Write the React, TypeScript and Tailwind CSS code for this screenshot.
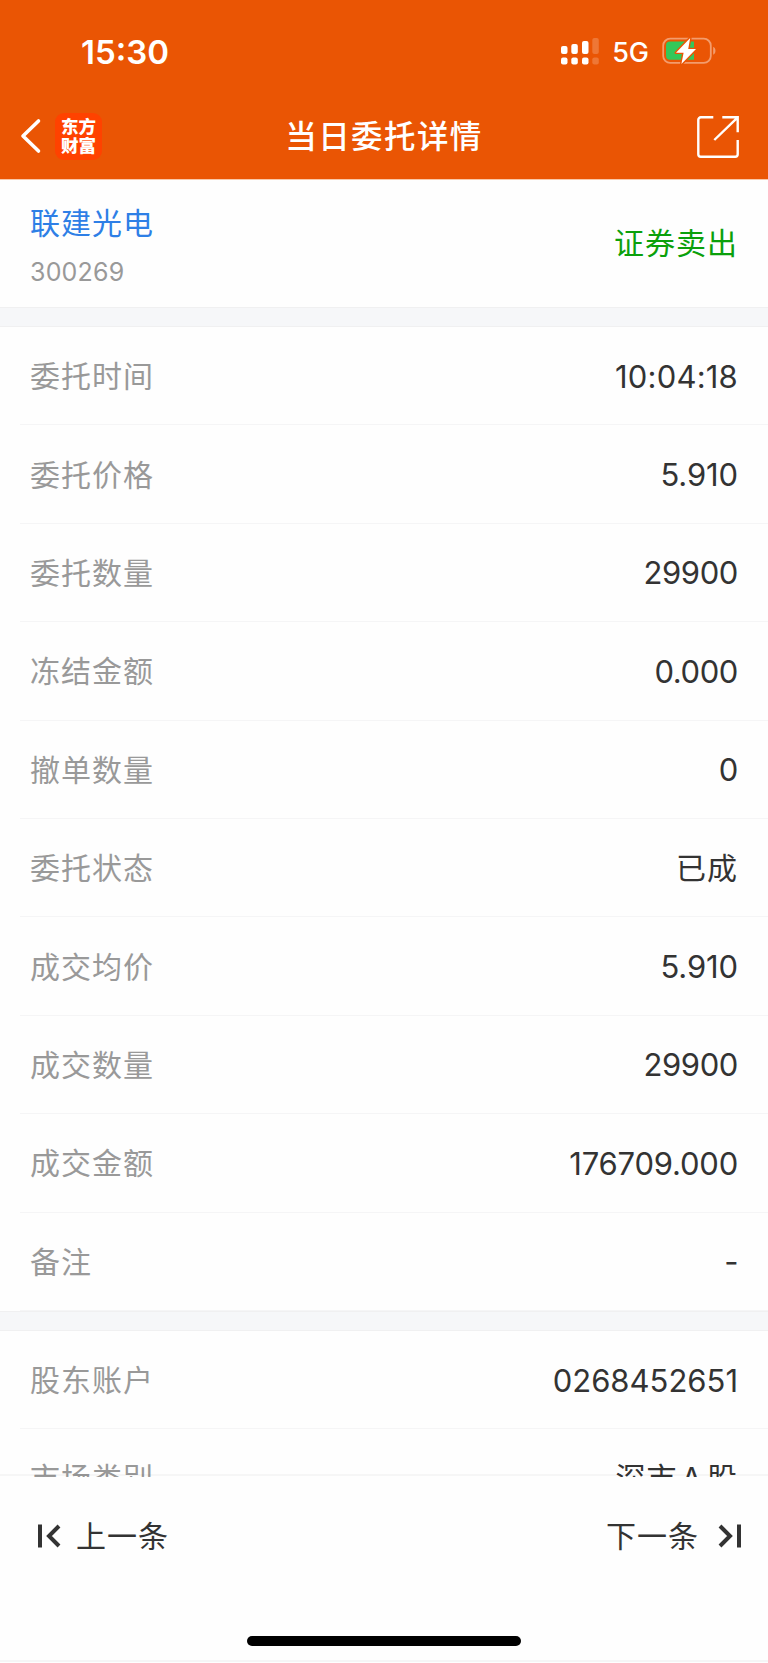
import clsx from "clsx";

type Item = { label: string; value: string; spacing?: string };

const orderItems: Item[] = [
  { label: "委托时间", value: "10:04:18", spacing: "tracking-[0.2px]" },
  { label: "委托价格", value: "5.910", spacing: "tracking-[-0.1px]" },
  { label: "委托数量", value: "29900" },
  { label: "冻结金额", value: "0.000" },
  { label: "撤单数量", value: "0" },
  { label: "委托状态", value: "已成", spacing: "tracking-[1px]" },
  { label: "成交均价", value: "5.910", spacing: "tracking-[-0.1px]" },
  { label: "成交数量", value: "29900" },
  { label: "成交金额", value: "176709.000", spacing: "tracking-[-0.2px]" },
  { label: "备注", value: "-" },
];

const accountItems: Item[] = [
  { label: "股东账户", value: "0268452651", spacing: "tracking-[0px]" },
  { label: "市场类别", value: "深市 A 股", spacing: "tracking-[1px] [word-spacing:-5.5px]" },
];

const SignalIcon = () => (
  <svg className="-mt-[2px]" width="40" height="28" viewBox="0 0 40 28" fill="white">
    <rect x="1" y="9" width="6.5" height="8" rx="2" />
    <rect x="11.3" y="7" width="6.5" height="10" rx="2" />
    <rect x="22" y="4" width="6.5" height="13" rx="2" />
    <rect x="32.3" y="1" width="6.5" height="16" rx="2" opacity="0.2" />
    <rect x="1" y="20.5" width="6.5" height="7" rx="2" />
    <rect x="11.3" y="20.5" width="6.5" height="7" rx="2" />
    <rect x="22" y="20.5" width="6.5" height="7" rx="2" />
    <rect x="32.3" y="20.5" width="6.5" height="7" rx="2" opacity="0.2" />
  </svg>
);

const BatteryIcon = () => (
  <svg className="-mt-[2px]" width="56" height="28" viewBox="0 0 56 28" fill="none">
    <rect x="1.2" y="1.7" width="47.6" height="24.2" rx="7" stroke="white" strokeOpacity="0.42" strokeWidth="1.8" />
    <path d="M51.2 9.8c3 1.2 3 6.8 0 8z" fill="white" fillOpacity="0.42" />
    <path d="M8 4.6h24v18.2H8a4 4 0 0 1-4-4V8.6a4 4 0 0 1 4-4z" fill="#34c759" />
    <path
      d="M28.2 1 14 15.7h7.6L19.4 27 34 12.1h-7.8z"
      fill="white"
      stroke="#ea5504"
      strokeWidth="2.8"
      strokeLinejoin="round"
      paintOrder="stroke"
    />
  </svg>
);

const ShareIcon = () => (
  <svg className="mt-[1px]" width="42" height="42" viewBox="0 0 42 42" fill="none" stroke="white" strokeWidth="2.4">
    <path d="M16.3 1.3H3.8a2.5 2.5 0 0 0-2.5 2.5v34.4a2.5 2.5 0 0 0 2.5 2.5h34.4a2.5 2.5 0 0 0 2.5-2.5V24" />
    <path d="M25.3 1.3h15.4v15M40.2 1.8 17.3 24" />
  </svg>
);

const StepIcon = ({ className }: { className?: string }) => (
  <svg className={className} width="24" height="24" viewBox="0 0 24 24" fill="none" stroke="#333333" strokeWidth="4">
    <path d="M3 0.6v22.8M22 2 12 12 22 22" />
  </svg>
);

const Row = ({ label, value, spacing = "tracking-[-0.4px]" }: Item) => (
  <div className="ml-5 flex h-[98.4px] shrink-0 items-center justify-between border-b-[1.5px] border-[#f5f5f6] pt-[1px] pr-[30px] pl-[10px] leading-none">
    <span className="text-[30px] tracking-[1px] text-[#999999]">{label}</span>
    <span className={clsx("text-[#333333]", /\d|^-$/.test(value) ? "text-[31px]" : "text-[30px]", spacing)}>{value}</span>
  </div>
);

const Gap = () => <div className="h-5 shrink-0 border-y border-[#f0f0f1] bg-[#f6f7f9]" />;

const App = () => {
  return (
    <div className="flex h-[1663px] w-[768px] flex-col overflow-hidden bg-[#fefefe] font-['Inter','Noto_Sans_CJK_SC',sans-serif]">
      <header className="h-[180px] shrink-0 border-b border-[#f9c7a9] bg-[#ea5504] text-white">
        <div className="flex h-[104px] items-center justify-between pr-[50px] pl-[81px]">
          <span className="text-[33px] leading-none font-semibold">15:30</span>
          <div className="flex items-center">
            <SignalIcon />
            <span className="mr-[13px] ml-[12px] text-[27px] leading-none font-medium">5G</span>
            <BatteryIcon />
          </div>
        </div>
        <div className="grid h-[64px] grid-cols-3 items-center">
          <div className="flex items-center pl-5">
            <svg width="22" height="36" viewBox="0 0 22 36" fill="none" stroke="white" strokeWidth="3.6" strokeLinecap="round" strokeLinejoin="round">
              <path d="M18.5 3 3 18l15.5 15" />
            </svg>
            <div className="ml-[13px] flex h-[47px] w-[47px] flex-col items-center justify-center rounded-[9px] bg-[#ff4200] text-[17.5px] leading-[19px] font-black">
              <span>东方</span>
              <span>财富</span>
            </div>
          </div>
          <h1 className="pt-[2px] text-center text-[31.5px] leading-none font-medium tracking-[1.4px] whitespace-nowrap">当日委托详情</h1>
          <div className="flex justify-end pr-[29px]">
            <ShareIcon />
          </div>
        </div>
      </header>

      <main className="flex h-[1297px] shrink-0 flex-col overflow-hidden">
        <section className="flex h-[127px] shrink-0 items-center justify-between px-[30px] leading-none">
          <div className="flex flex-col gap-[22px] pt-[6px]">
            <span className="text-[30px] tracking-[1px] text-[#2e7fe6]">联建光电</span>
            <span className="text-[25px] tracking-[0.2px] text-[#999999]">300269</span>
          </div>
          <span className="pb-[1px] text-[30px] tracking-[1px] text-[#0ba00b]">证券卖出</span>
        </section>
        <Gap />
        {orderItems.map((item) => (
          <Row key={item.label} {...item} />
        ))}
        <Gap />
        {accountItems.map((item) => (
          <Row key={item.label} {...item} />
        ))}
      </main>

      <footer className="relative -mt-[3px] flex grow flex-col border-t-2 border-black/[0.03]">
        <div className="flex h-[120px] items-center justify-between pr-[26px] pl-[37px] text-[30px] leading-none tracking-[1px] text-[#333333]">
          <button className="flex items-center gap-[15px]">
            <StepIcon />
            上一条
          </button>
          <button className="flex items-center gap-[19px]">
            下一条
            <StepIcon className="rotate-180" />
          </button>
        </div>
        <div className="mx-auto mt-auto h-[10px] w-[274px] rounded-full bg-black" />
        <div className="mt-[14px] h-[3px] border-t-2 border-[#f5f5f6]" />
      </footer>
    </div>
  );
};

export default App;
